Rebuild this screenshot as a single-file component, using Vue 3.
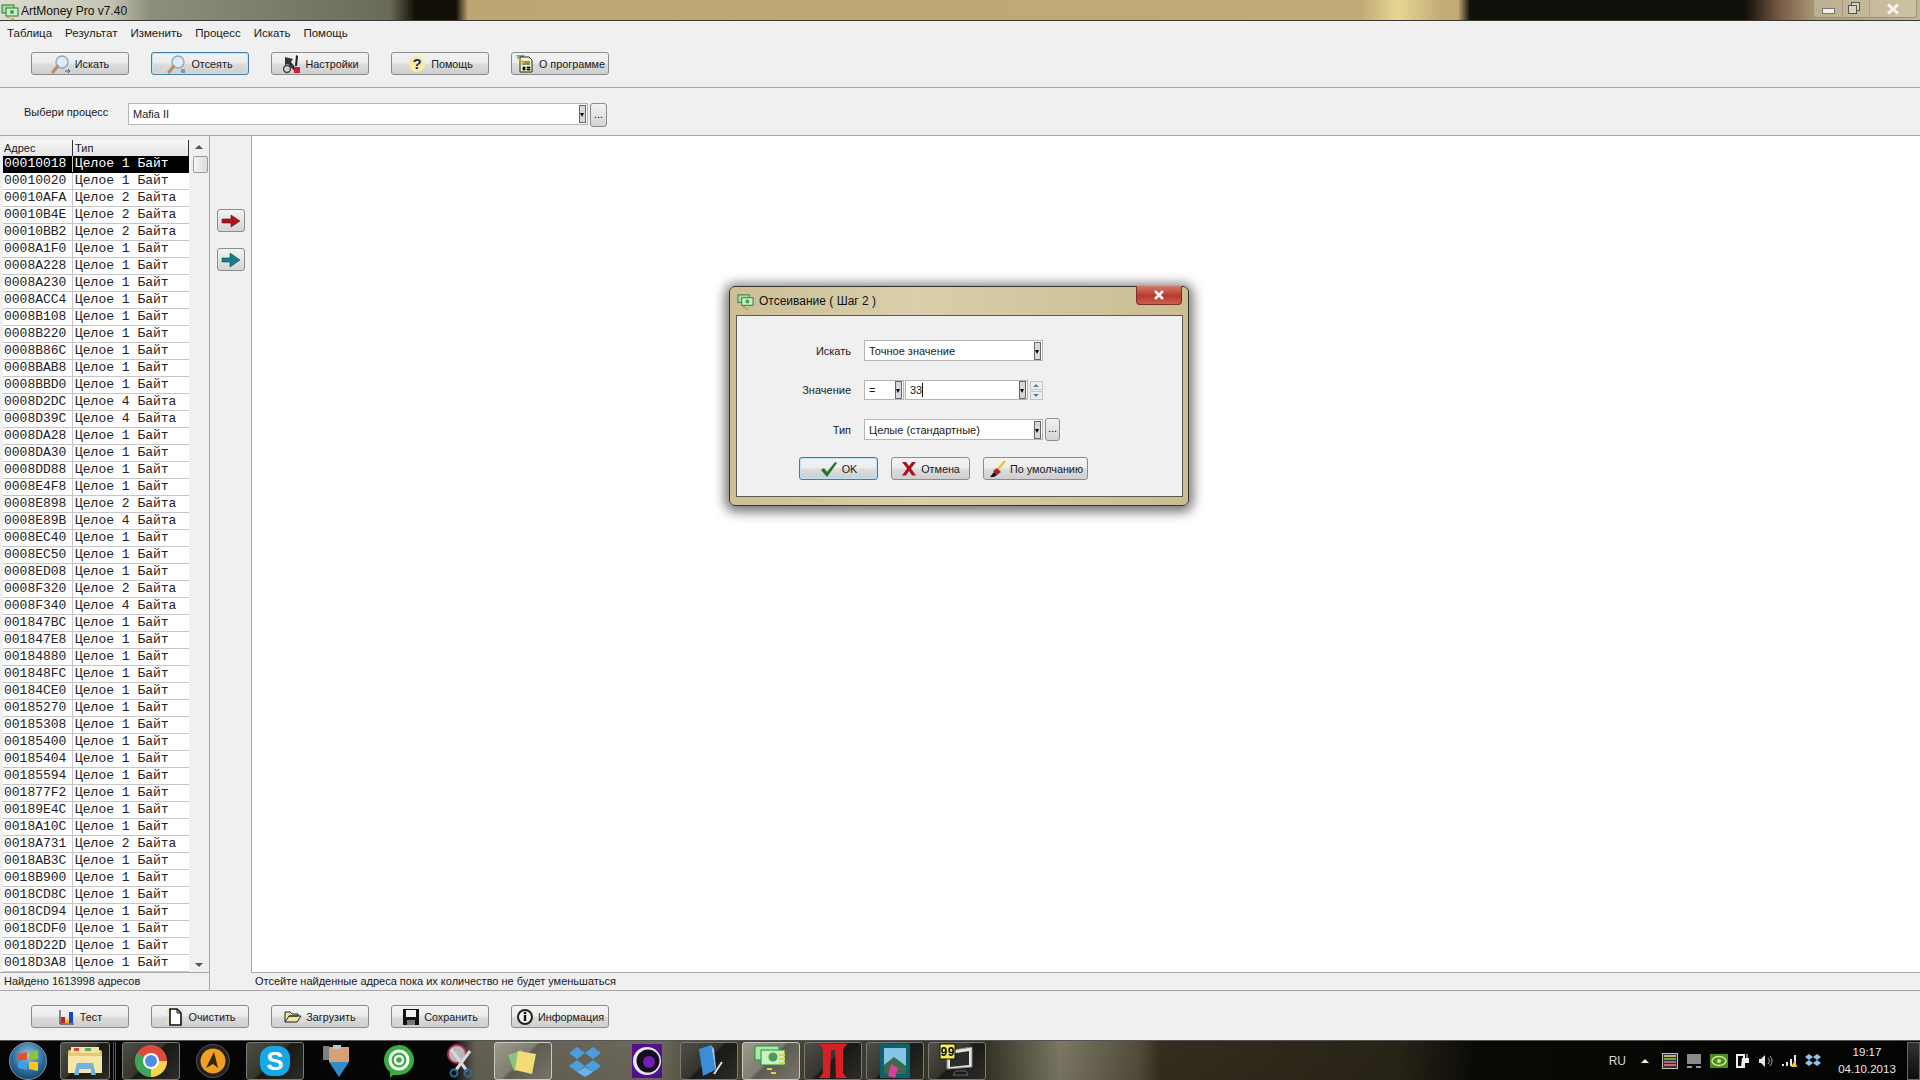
<template>
  <div class="app">
    <div class="titlebar">
      <svg class="app-icon" width="18" height="18" viewBox="0 0 18 18"><rect x="1" y="3" width="12" height="8" fill="#9fe3a0" stroke="#2d7a3a"/><rect x="5" y="6" width="12" height="8" fill="#c5f0c0" stroke="#2d7a3a"/><circle cx="11" cy="10" r="2" fill="#4f9a58"/><path d="M6 15h3M10 17h3" stroke="#b8a020" stroke-width="1.5"/></svg>
      <span class="title-text">ArtMoney Pro v7.40</span>
      <div class="win-buttons">
        <div class="win-btn min"><span class="min-bar"></span></div>
        <div class="win-btn restore"><span class="rest-back"></span><span class="rest-front"></span></div>
        <div class="win-btn close"><svg width="14" height="12" viewBox="0 0 14 12"><path d="M2 1.5l10 9M12 1.5l-10 9" stroke="#f4f4f0" stroke-width="3"/></svg></div>
      </div>
    </div>

    <div class="menu">
      <span v-for="m in menu" :key="m">{{ m }}</span>
    </div>

    <div class="toolbar top">
      <button class="btn"><svg width="20" height="20" viewBox="0 0 20 20"><circle cx="11" cy="8" r="6" fill="#dcecf6" stroke="#8fa9bd" stroke-width="1.4"/><path d="M6.5 12.5L2 18" stroke="#b98d66" stroke-width="3.2" stroke-linecap="round"/><path d="M14 17h5M17 15l2 2-2 2" stroke="#35607f" fill="none"/></svg>Искать</button>
      <button class="btn focused"><svg width="20" height="20" viewBox="0 0 20 20"><circle cx="11" cy="8" r="6" fill="#dcecf6" stroke="#8fa9bd" stroke-width="1.4"/><path d="M6.5 12.5L2 18" stroke="#b98d66" stroke-width="3.2" stroke-linecap="round"/><path d="M15 15v4M17 15v4" stroke="#35607f"/></svg>Отсеять</button>
      <button class="btn"><svg width="20" height="20" viewBox="0 0 20 20"><path d="M3 3l8 2-2 3 7 9-2 2-8-9-3 1z" fill="#333"/><path d="M14 1l2 1-1 10h-2z" fill="#222"/><rect x="12" y="13" width="6" height="6" fill="#c8202a"/><circle cx="5" cy="15" r="3.4" fill="none" stroke="#444" stroke-width="1.5"/></svg>Настройки</button>
      <button class="btn"><svg width="20" height="20" viewBox="0 0 20 20"><circle cx="10" cy="10" r="8" fill="#f6ee9c"/><text x="10" y="15" text-anchor="middle" class="help-mark">?</text></svg>Помощь</button>
      <button class="btn"><svg width="20" height="20" viewBox="0 0 20 20"><path d="M1 1h9l-5 6z" fill="#48c0a8"/><path d="M5 3h9l3 3v12H5z" fill="#fbf6c0" stroke="#222"/><path d="M7 8h8M7 10h8M8 13h2v3H8zM12 13h3v1h-3zM12 15h3v1h-3z" stroke="#222"/><path d="M2 3l7 6" stroke="#d9b040" stroke-width="2"/></svg>О программе</button>
    </div>

    <div class="process-row">
      <span class="process-label">Выбери процесс</span>
      <div class="field process-field">
        <span class="field-text">Mafia II</span>
        <span class="combo-arrow"></span>
      </div>
      <button class="dots tall">...</button>
    </div>

    <div class="main">
      <div class="left-col">
        <div class="list-wrap">
          <div class="list">
            <div class="list-head">
              <span class="cell-addr">Адрес</span>
              <span class="cell-type">Тип</span>
            </div>
            <div v-for="(r, i) in rows" :key="r.addr" class="row" :class="{ selected: i === 0 }">
              <span class="cell-addr">{{ r.addr }}</span>
              <span class="cell-type">{{ typeName(r.size) }}</span>
            </div>
          </div>
          <div class="scrollbar">
            <span class="arrow-up"></span>
            <span class="thumb"></span>
            <span class="arrow-down"></span>
          </div>
        </div>
        <div class="status">Найдено 1613998 адресов</div>
      </div>

      <div class="mid-col">
        <button class="arrow-btn"><svg width="20" height="14" viewBox="0 0 20 14"><path d="M1 5h9V1l9 6-9 6V9H1z" fill="#b3121d" stroke="#5a1015" stroke-width=".6"/></svg></button>
        <button class="arrow-btn"><svg width="20" height="16" viewBox="0 0 20 16"><path d="M1 6h8V1l10 7-10 7v-5H1z" fill="#157f86" stroke="#0c4a50" stroke-width=".6"/></svg></button>
      </div>

      <div class="right-col">
        <div class="canvas"></div>
        <div class="status">Отсейте найденные адреса пока их количество не будет уменьшаться</div>
      </div>
    </div>

    <div class="toolbar bottom">
      <button class="btn"><svg width="18" height="18" viewBox="0 0 18 18"><path d="M2 2v14h14" fill="none" stroke="#222"/><rect x="3" y="9" width="4" height="6" fill="#c8202a"/><rect x="7" y="12" width="4" height="3" fill="#e8c020"/><rect x="11" y="4" width="4" height="11" fill="#2040c0"/></svg>Тест</button>
      <button class="btn"><svg width="20" height="20" viewBox="0 0 20 20"><path d="M2 3l3 3M2 17l3-2" stroke="#f2ea90" stroke-width="3"/><path d="M5 2h7l4 4v12H5z" fill="#fff" stroke="#111" stroke-width="1.6"/><path d="M12 2v4h4" fill="none" stroke="#111"/></svg>Очистить</button>
      <button class="btn"><svg width="18" height="16" viewBox="0 0 18 16"><path d="M1 13V3h5l2 2h6v2H5l-4 6h12l4-6H5" fill="#f4e8a0" stroke="#222"/></svg>Загрузить</button>
      <button class="btn"><svg width="18" height="18" viewBox="0 0 18 18"><path d="M1 1h16v16H1z" fill="#111"/><rect x="4" y="2" width="10" height="7" fill="#f2f2f2"/><rect x="5" y="12" width="8" height="5" fill="#777"/></svg>Сохранить</button>
      <button class="btn"><svg width="18" height="18" viewBox="0 0 18 18"><circle cx="9" cy="9" r="7" fill="#f4f4f4" stroke="#222" stroke-width="2"/><path d="M9 7v6" stroke="#111" stroke-width="2.4"/><circle cx="9" cy="5" r="1.3" fill="#111"/></svg>Информация</button>
    </div>

    <div class="taskbar">
      <div class="orb">
        <svg width="46" height="38" viewBox="0 0 46 38"><defs><radialGradient id="orbg" cx=".5" cy=".35" r=".7"><stop offset="0" stop-color="#9cc8e4"/><stop offset=".6" stop-color="#2b6e9f"/><stop offset="1" stop-color="#123c5c"/></radialGradient></defs><circle cx="23" cy="19" r="18.5" fill="url(#orbg)" stroke="#7f98a8"/><path d="M13 12l9-2v8h-9z" fill="#e8502c"/><path d="M24 10l9-2v9h-9z" fill="#8cc63e"/><path d="M13 20h9v8l-9-2z" fill="#3f9fe0"/><path d="M24 20h9v9l-9-2z" fill="#f8c820"/></svg>
      </div>
      <div class="slot on explorer">
        <svg width="40" height="36" viewBox="0 0 40 36"><rect x="3" y="7" width="34" height="22" rx="2" fill="#e8c86e"/><path d="M6 4h28v6H6z" fill="#f4e4a4"/><path d="M9 5h5v3H9z" fill="#d04a3a"/><path d="M20 5h6v3h-6z" fill="#5ab04a"/><path d="M3 13h34v17H3z" fill="#f6e6a8"/><path d="M12 20h16l3 12h-5v-6H14v6H9z" fill="#6eb4dc"/></svg>
      </div>
      <div class="divider"></div>
      <div class="slot on">
        <svg width="34" height="34" viewBox="0 0 34 34"><circle cx="17" cy="17" r="16" fill="#dd4b3e"/><path d="M17 17L3.2 9A16 16 0 0 0 17 33z" fill="#3aa757"/><path d="M17 17h16a16 16 0 0 1-16 16z" fill="#fbd34b"/><circle cx="17" cy="17" r="8" fill="#fff"/><circle cx="17" cy="17" r="6" fill="#4a8fe2"/></svg>
      </div>
      <div class="slot">
        <svg width="34" height="34" viewBox="0 0 34 34"><circle cx="17" cy="17" r="16.5" fill="#222" stroke="#555"/><circle cx="17" cy="17" r="12.5" fill="#f0a021"/><path d="M10 24L18 8l4 16-5-4z" fill="#33220c"/></svg>
      </div>
      <div class="slot on">
        <svg width="36" height="34" viewBox="0 0 36 34"><rect x="3" y="2" width="30" height="30" rx="12" fill="#16a8e4"/><text x="18" y="26" text-anchor="middle" class="skype-mark">S</text></svg>
      </div>
      <div class="slot">
        <svg width="36" height="36" viewBox="0 0 36 36"><path d="M4 3h6v14H4z" fill="#7a7f8a"/><path d="M10 4h20v15H10z" fill="#d8a078"/><path d="M14 2h8v4h-8z" fill="#bcc4cc"/><path d="M10 19h20l-10 15z" fill="#2e8fc8"/></svg>
      </div>
      <div class="slot">
        <svg width="34" height="36" viewBox="0 0 34 36"><path d="M17 2a15 15 0 0 1 0 30h-6l-3 3v-6A15 15 0 0 1 17 2z" fill="#39ae3d"/><circle cx="17" cy="17" r="9" fill="none" stroke="#fff" stroke-width="3"/><circle cx="17" cy="17" r="4" fill="none" stroke="#fff" stroke-width="2.4"/></svg>
      </div>
      <div class="slot">
        <svg width="36" height="36" viewBox="0 0 36 36"><circle cx="14" cy="11" r="9" fill="#b8b8bc" stroke="#b03048" stroke-width="2"/><path d="M8 6l16 22M27 8L13 27" stroke="#d8d8dc" stroke-width="3"/><circle cx="25" cy="30" r="3.5" fill="none" stroke="#2c6c94" stroke-width="2"/><circle cx="11" cy="30" r="3.5" fill="none" stroke="#2c6c94" stroke-width="2"/></svg>
      </div>
      <div class="slot on light">
        <svg width="34" height="32" viewBox="0 0 34 32"><path d="M2 10l14-5 4 16-12 5z" fill="#8cc47c"/><path d="M12 6l18 3-4 20-17-4z" fill="#f2dc78"/></svg>
      </div>
      <div class="slot">
        <svg width="34" height="34" viewBox="0 0 34 34"><path d="M9 3l8 6-8 6-8-6zM25 3l8 6-8 6-8-6zM9 16l8 6-8 6-8-6zM25 16l8 6-8 6-8-6z" fill="#4a9ee0"/><path d="M9 28l8 5 8-5-8-5z" fill="#6ab2ea"/></svg>
      </div>
      <div class="slot">
        <svg width="34" height="36" viewBox="0 0 34 36"><rect x="2" y="1" width="30" height="34" fill="#52108c"/><circle cx="17" cy="18" r="14" fill="#e8e4f0"/><circle cx="18" cy="18" r="11.5" fill="#15101c"/><circle cx="19" cy="19" r="6" fill="#6c1fb0"/></svg>
      </div>
      <div class="slot on">
        <svg width="30" height="34" viewBox="0 0 30 34"><path d="M5 5l12-4 4 25-12 6z" fill="#3c8ed8"/><path d="M17 1l3 4 2 19-1 2z" fill="#8cc4f0"/><path d="M20 30l8-12" stroke="#d4e4f4" stroke-width="2"/></svg>
      </div>
      <div class="slot on light">
        <svg width="36" height="36" viewBox="0 0 36 36"><rect x="2" y="3" width="24" height="14" fill="#a8e8a8" stroke="#2a8a3a"/><rect x="8" y="7" width="24" height="15" fill="#c8f0c0" stroke="#2a8a3a"/><circle cx="20" cy="14" r="4.5" fill="#4f9a58"/><path d="M26 12h6M26 16h6M26 20h6M14 26h5M18 30h5" stroke="#e8d040" stroke-width="2"/></svg>
      </div>
      <div class="slot on">
        <svg width="32" height="36" viewBox="0 0 32 36"><path d="M2 1h28l-4 5v24l4 5H19l-1-28h-4l-1 28H2l4-5V6z" fill="#d81f26"/></svg>
      </div>
      <div class="slot on">
        <svg width="32" height="36" viewBox="0 0 32 36"><rect x="1" y="1" width="30" height="34" fill="#10606c"/><rect x="5" y="5" width="22" height="26" fill="#86c4e8"/><path d="M5 22l10-8 12 9v8H5z" fill="#3a6a48"/><path d="M9 33l3-12 7 4-3 10z" fill="#d8409a"/></svg>
      </div>
      <div class="slot on">
        <svg width="36" height="36" viewBox="0 0 36 36"><path d="M8 8l25-4v20L8 26z" fill="#e4e4e4" stroke="#888"/><path d="M11 11l19-3v14l-19 2z" fill="#2c2c2c"/><path d="M17 28h10l2 4H14z" fill="#181818" stroke="#666"/><rect x="1" y="1" width="15" height="15" fill="#f6ee54" stroke="#111"/><text x="8.5" y="13" text-anchor="middle" class="badge-mark">99</text></svg>
      </div>

      <div class="tray">
        <span class="lang">RU</span>
        <span class="tray-up"></span>
        <svg width="16" height="16" viewBox="0 0 16 16"><rect x=".5" y=".5" width="15" height="15" fill="#332a44" stroke="#c0c8a0"/><path d="M2 3h12" stroke="#c9b34a" stroke-width="2"/><path d="M2 6h12" stroke="#58a858" stroke-width="2"/><path d="M2 9h12" stroke="#a86888" stroke-width="2"/><path d="M2 12h12" stroke="#c87050" stroke-width="2"/></svg>
        <svg width="16" height="16" viewBox="0 0 16 16"><rect x="1" y="1" width="14" height="10" fill="#8a8a8a"/><path d="M1 14h5M10 14h5" stroke="#999" stroke-width="2"/></svg>
        <svg width="18" height="14" viewBox="0 0 18 14"><rect width="18" height="14" fill="#4e8c1c"/><ellipse cx="9" cy="7" rx="7" ry="4.5" fill="none" stroke="#c8e8a0" stroke-width="1.5"/><circle cx="9" cy="7" r="2" fill="#c8e8a0"/></svg>
        <svg width="14" height="16" viewBox="0 0 14 16"><path d="M1 2h7v12H1z" fill="none" stroke="#eee" stroke-width="2"/><path d="M6 5h7v5H9L7 14H5z" fill="#eee"/><path d="M8 1v4M11 1v4" stroke="#eee"/></svg>
        <svg width="15" height="14" viewBox="0 0 15 14"><path d="M1 5h2l4-4v12L3 9H1z" fill="#e8e8e8"/><path d="M10 4a4 4 0 0 1 0 6M12 2a7 7 0 0 1 0 10" stroke="#aaa" fill="none"/></svg>
        <svg width="16" height="14" viewBox="0 0 16 14"><path d="M1 10h2v2H1zM5 8h2v4H5zM9 5h2v7H9zM13 1h2v11h-2z" fill="#e8e8e8"/><path d="M10 13l4-7 2 7z" fill="#f2c830"/></svg>
        <svg width="16" height="15" viewBox="0 0 16 15"><path d="M4 1l4 3-4 3-4-3zM12 1l4 3-4 3-4-3zM4 7l4 3-4 3-4-3zM12 7l4 3-4 3-4-3z" fill="#8ec4ee"/></svg>
        <div class="clock"><span>19:17</span><span>04.10.2013</span></div>
        <div class="show-desktop"></div>
      </div>
    </div>

    <div class="dialog">
      <div class="dialog-title">
        <svg width="17" height="17" viewBox="0 0 18 18"><rect x="1" y="2" width="12" height="8" fill="#9fe3a0" stroke="#2d7a3a"/><rect x="5" y="5" width="12" height="8" fill="#c5f0c0" stroke="#2d7a3a"/><circle cx="11" cy="9" r="2" fill="#4f9a58"/><path d="M6 15h3M9 17h3" stroke="#b8a020" stroke-width="1.5"/></svg>
        <span>Отсеивание ( Шаг 2 )</span>
        <div class="dialog-close"><svg width="12" height="10" viewBox="0 0 12 10"><path d="M2 1l8 8M10 1l-8 8" stroke="#f6f6f6" stroke-width="2.6"/></svg></div>
      </div>
      <div class="dialog-body">
        <div class="d-row first">
          <span class="d-label">Искать</span>
          <div class="field wide"><span class="field-text">Точное значение</span><span class="combo-arrow"></span></div>
        </div>
        <div class="d-row second">
          <span class="d-label">Значение</span>
          <div class="field op"><span class="field-text">=</span><span class="combo-arrow"></span></div>
          <div class="field val"><span class="field-text caret">33</span><span class="combo-arrow"></span></div>
          <div class="spin"><span class="spin-up"></span><span class="spin-down"></span></div>
        </div>
        <div class="d-row third">
          <span class="d-label">Тип</span>
          <div class="field wide"><span class="field-text">Целые (стандартные)</span><span class="combo-arrow"></span></div>
          <button class="dots">...</button>
        </div>
        <div class="d-buttons">
          <button class="btn focused"><svg width="18" height="16" viewBox="0 0 18 16"><path d="M1 9l3-2 3 4 8-10 2 1-10 14z" fill="#1c7a2a"/></svg>OK</button>
          <button class="btn"><svg width="16" height="15" viewBox="0 0 16 15"><path d="M1 1h4l3 4 3-4h4l-5 6.500 5 7h-4l-3-4.500-3 4.500H1l5-7z" fill="#a8141c"/></svg>Отмена</button>
          <button class="btn def"><svg width="18" height="18" viewBox="0 0 18 18"><path d="M17 1l-7 8" stroke="#e8c830" stroke-width="2.400"/><path d="M9 8l4 4-4 3-4-4z" fill="#b02028"/><path d="M2 17l4-5 3 3-3 2z" fill="#111"/></svg>По умолчанию</button>
        </div>
      </div>
    </div>
  </div>
</template>

<script setup>
const menu = ['Таблица', 'Результат', 'Изменить', 'Процесс', 'Искать', 'Помощь']

const data = `00010018 1,00010020 1,00010AFA 2,00010B4E 2,00010BB2 2,0008A1F0 1,0008A228 1,0008A230 1,0008ACC4 1,0008B108 1,0008B220 1,0008B86C 1,0008BAB8 1,0008BBD0 1,0008D2DC 4,0008D39C 4,0008DA28 1,0008DA30 1,0008DD88 1,0008E4F8 1,0008E898 2,0008E89B 4,0008EC40 1,0008EC50 1,0008ED08 1,0008F320 2,0008F340 4,001847BC 1,001847E8 1,00184880 1,001848FC 1,00184CE0 1,00185270 1,00185308 1,00185400 1,00185404 1,00185594 1,001877F2 1,00189E4C 1,0018A10C 1,0018A731 2,0018AB3C 1,0018B900 1,0018CD8C 1,0018CD94 1,0018CDF0 1,0018D22D 1,0018D3A8 1`

const rows = data.split(',').map((s) => {
  const [addr, size] = s.split(' ')
  return { addr, size }
})

const typeName = (size) => {
  if (size === '1') return 'Целое 1 Байт'
  return `Целое ${size} Байта`
}
</script>

<style>
html, body {
  margin: 0;
  overflow: hidden;
}
</style>

<style scoped>
.app {
  position: relative;
  width: 1920px;
  height: 1080px;
  display: flex;
  flex-direction: column;
  overflow: hidden;
  background: #f0f0f0;
  color: #1a1a1a;
  font-family: "Liberation Sans", Arial, sans-serif;
  font-size: 11px;
}

.titlebar {
  height: 21px;
  box-sizing: border-box;
  padding-top: 1px;
  flex: none;
  display: flex;
  align-items: center;
  border-bottom: 1px solid #3a3a34;
  background: linear-gradient(90deg, #ddddd0 0, #c4c4b4 110px, #8e8e7c 150px, #777966 300px, #6a6a58 390px, #141008 415px, #141008 456px, #bda672 468px, #c0aa76 1360px, #e6d694 1398px, #c4ae78 1440px, #c2ac76 1458px, #12100a 1470px, #12100a 1745px, #7a5a44 1780px, #a89878 1815px, #c2b898 1920px);
}
.app-icon {
  flex: none;
  margin-left: 1px;
}
.title-text {
  margin-left: 2px;
  font-size: 12px;
  color: #111;
}
.win-buttons {
  margin-left: auto;
  margin-right: 3px;
  margin-top: -1px;
  height: 17px;
  align-self: flex-start;
  display: flex;
  border: 1px solid #9c9276;
  border-top: 0;
  border-radius: 0 0 4px 4px;
  background: rgba(226, 218, 190, .35);
}
.win-btn {
  display: flex;
  align-items: center;
  justify-content: center;
  position: relative;
  border-right: 1px solid #a89e80;
}
.win-btn.close {
  border-right: 0;
  width: 46px;
}
.win-btn.min {
  width: 28px;
}
.win-btn.restore {
  width: 26px;
}
.min-bar {
  width: 11px;
  height: 4px;
  margin-top: 4px;
  background: #f2f0e6;
  border: 1px solid #777;
}
.rest-back, .rest-front {
  position: absolute;
  width: 7px;
  height: 7px;
  border: 1.5px solid #555;
  background: #d8d4c4;
}
.rest-back {
  top: 2px;
  left: 8px;
}
.rest-front {
  top: 5px;
  left: 5px;
}

.menu {
  height: 24px;
  flex: none;
  display: flex;
  align-items: center;
  gap: 13px;
  padding-left: 7px;
  font-size: 11.5px;
}

.toolbar {
  display: flex;
  flex: none;
  gap: 22px;
  padding-left: 31px;
}
.toolbar.top {
  padding-top: 7px;
  height: 35px;
  border-bottom: 1px solid #a8a8a8;
}
.toolbar.bottom {
  height: 35px;
  padding-top: 14px;
  border-top: 1px solid #a8a8a8;
}

.btn {
  width: 98px;
  height: 23px;
  padding: 0;
  display: inline-flex;
  align-items: center;
  justify-content: center;
  gap: 4px;
  border: 1px solid #8c8c8c;
  border-radius: 3px;
  background: linear-gradient(#f3f3f3 0, #ececec 48%, #dcdcdc 52%, #cfcfcf 100%);
  font: inherit;
  font-size: 10.8px;
  color: #1a1a1a;
}
.btn.focused {
  border-color: #3c7fa8;
  box-shadow: inset 0 0 0 1px #bfe4f6;
}
.btn svg {
  flex: none;
}
.help-mark {
  font: bold 15px "Liberation Sans", sans-serif;
  fill: #1c1c8c;
}

.process-row {
  flex: none;
  height: 48px;
  display: flex;
  align-items: flex-start;
  padding-top: 15px;
  box-sizing: border-box;
  border-bottom: 1px solid #a8a8a8;
}
.process-label {
  margin: 3px 0 0 24px;
  width: 104px;
}
.field {
  box-sizing: border-box;
  display: flex;
  align-items: center;
  justify-content: space-between;
  height: 22px;
  background: #fff;
  border: 1px solid #b4b4b4;
  padding-right: 1px;
}
.process-field {
  width: 460px;
}
.field-text {
  padding-left: 4px;
}
.combo-arrow {
  position: relative;
  box-sizing: border-box;
  width: 7px;
  height: 18px;
  border: 1px solid #666;
  background: #d8d8d8;
}
.combo-arrow::after {
  content: "";
  position: absolute;
  left: 0;
  top: 7px;
  border-left: 2.5px solid transparent;
  border-right: 2.5px solid transparent;
  border-top: 4px solid #000;
}
.dots {
  box-sizing: border-box;
  width: 16px;
  height: 23px;
  margin-left: 1px;
  padding: 0 0 2px;
  border: 1px solid #8c8c8c;
  border-radius: 3px;
  background: linear-gradient(#f3f3f3, #d4d4d4);
  font: inherit;
  line-height: 1;
}
.dots.tall {
  margin-left: 2px;
  width: 17px;
  height: 24px;
}

.main {
  flex: 1;
  min-height: 0;
  display: flex;
}
.left-col {
  width: 210px;
  flex: none;
  box-sizing: border-box;
  border-right: 1px solid #a8a8a8;
  display: flex;
  flex-direction: column;
}
.list-wrap {
  flex: 1;
  padding: 4px 2px 0 3px;
  display: flex;
  background: #f0f0f0;
  border-bottom: 1px solid #a8a8a8;
}
.list {
  width: 186px;
  flex: none;
}
.list-head {
  height: 16px;
  display: flex;
  align-items: center;
  background: linear-gradient(#f6f6f6, #e4e4e4);
  font-size: 11px;
}
.list-head .cell-addr, .list-head .cell-type {
  height: 16px;
  line-height: 17px;
  font-family: inherit;
  letter-spacing: 0;
  border-right: 1px solid #333;
}
.cell-addr {
  box-sizing: border-box;
  width: 70px;
  flex: none;
  padding-left: 1px;
  border-right: 1px solid #c6c6c6;
}
.cell-type {
  box-sizing: border-box;
  flex: 1;
  padding-left: 2px;
}
.row {
  box-sizing: border-box;
  height: 17px;
  display: flex;
  align-items: center;
  background: #fff;
  border-bottom: 1px solid #c6c6c6;
  font: 13px/16px "Liberation Mono", "Courier New", monospace;
  color: #222;
  white-space: pre;
}
.row.selected {
  background: #000;
  color: #fff;
  border-bottom-color: #000;
}
.scrollbar {
  position: relative;
  flex: 1;
  margin-left: 1px;
  background: #f0f0f0;
}
.arrow-up, .arrow-down {
  position: absolute;
  left: 5px;
  width: 0;
  height: 0;
  border-left: 4px solid transparent;
  border-right: 4px solid transparent;
}
.arrow-up {
  top: 5px;
  border-bottom: 4px solid #555;
}
.arrow-down {
  bottom: 5px;
  border-top: 4px solid #555;
}
.thumb {
  position: absolute;
  top: 16px;
  left: 3px;
  box-sizing: border-box;
  width: 15px;
  height: 17px;
  border: 1px solid #9c9c9c;
  border-radius: 2px;
  background: linear-gradient(90deg, #f6f6f6, #dcdcdc);
}
.status {
  height: 17px;
  flex: none;
  line-height: 17px;
  padding-left: 4px;
  white-space: nowrap;
}

.mid-col {
  width: 41px;
  flex: none;
  padding: 73px 0 0 7px;
  box-sizing: border-box;
  display: flex;
  flex-direction: column;
  gap: 16px;
}
.arrow-btn {
  width: 28px;
  height: 23px;
  padding: 0;
  display: flex;
  align-items: center;
  justify-content: center;
  border: 1px solid #8c8c8c;
  border-radius: 3px;
  background: linear-gradient(#f3f3f3, #d4d4d4);
}
.right-col {
  flex: 1;
  min-width: 0;
  display: flex;
  flex-direction: column;
}
.canvas {
  flex: 1;
  background: #fff;
  border-left: 1px solid #a8a8a8;
  border-bottom: 1px solid #a8a8a8;
}

.taskbar {
  flex: none;
  height: 40px;
  box-sizing: border-box;
  display: flex;
  align-items: center;
  border-top: 1px solid #555;
  color: #e6e6e6;
  background:
    linear-gradient(rgba(0, 0, 0, .1), rgba(0, 0, 0, .15)),
    linear-gradient(90deg, #060606 0, #060606 452px, #6e6b5c 475px, #787566 660px, #57533f 700px, #3a3828 985px, #8a8570 1060px, #5a5442 1139px, #3a3322 1160px, #2c2718 1400px, #0a0a06 1480px, #040404 1920px);
}
.orb {
  width: 56px;
  flex: none;
  margin-right: 4px;
  display: flex;
  justify-content: center;
}
.slot {
  box-sizing: border-box;
  width: 58px;
  height: 38px;
  flex: none;
  margin: 0 2px;
  display: flex;
  align-items: center;
  justify-content: center;
  border: 1px solid transparent;
}
.slot.on {
  border-color: #7a7a72;
  border-radius: 3px;
  background: linear-gradient(135deg, #4e4e48 0, #36362f 45%, #191916 50%, #2c2b27 100%);
}
.slot.on.light {
  background: linear-gradient(135deg, #9c9a8c 0, #807e70 45%, #5e5c50 50%, #77756a 100%);
  border-color: #c8c8c0;
}
.slot.explorer {
  width: 50px;
  margin: 0;
}
.divider {
  box-sizing: border-box;
  width: 3px;
  height: 38px;
  flex: none;
  margin: 0 4px 0 3px;
  border-left: 1px solid #555;
  border-right: 1px solid #555;
}
.slot svg {
  flex: none;
}
.skype-mark {
  font: bold 26px "Liberation Sans", sans-serif;
  fill: #fff;
}
.badge-mark {
  font: bold 12px "Liberation Mono", monospace;
  fill: #111;
}
.tray {
  margin-left: auto;
  display: flex;
  align-items: center;
  height: 100%;
  gap: 8px;
}
.lang {
  margin-right: 7px;
  font-size: 12px;
  color: #d8d8d8;
}
.tray-up {
  width: 0;
  height: 0;
  margin: 0 5px 0 0;
  border-left: 4px solid transparent;
  border-right: 4px solid transparent;
  border-bottom: 4px solid #eee;
}
.clock {
  width: 64px;
  margin-left: 6px;
  display: flex;
  flex-direction: column;
  align-items: center;
  gap: 3px;
  line-height: 14px;
  font-size: 11.5px;
  color: #e8e8e8;
}
.show-desktop {
  width: 13px;
  height: 38px;
  margin-left: 0;
  box-sizing: border-box;
  border: 1px solid #666;
  background: linear-gradient(#333, #0c0c0c);
}

.dialog {
  position: absolute;
  left: 729px;
  top: 286px;
  width: 460px;
  height: 220px;
  box-sizing: border-box;
  display: flex;
  flex-direction: column;
  border: 1px solid #333;
  border-radius: 6px;
  background: linear-gradient(90deg, #cdbf96, #d9cfac 40%, #cbbd92);
  box-shadow: 0 2px 12px 4px rgba(0, 0, 0, .55);
}
.dialog-title {
  position: relative;
  height: 28px;
  flex: none;
  display: flex;
  align-items: center;
  gap: 5px;
  padding-left: 7px;
  font-size: 12px;
  color: #111;
}
.dialog-close {
  position: absolute;
  right: 6px;
  top: -1px;
  width: 46px;
  height: 19px;
  box-sizing: border-box;
  display: flex;
  align-items: center;
  justify-content: center;
  border: 1px solid #7a3028;
  border-top: 0;
  border-radius: 0 0 4px 4px;
  background: linear-gradient(#d2796c, #b83a2c 55%, #c9604e);
}
.dialog-body {
  flex: 1;
  margin: 0 5px 8px 6px;
  padding-top: 24px;
  box-sizing: border-box;
  background: #f0f0f0;
  border: 1px solid #5a5a50;
}
.d-row {
  display: flex;
  align-items: center;
}
.d-label {
  width: 114px;
  flex: none;
  margin-right: 13px;
  text-align: right;
}
.d-row.first .field, .d-row.third .field {
  height: 21px;
}
.d-row.second {
  margin-top: 19px;
}
.d-row.second .field {
  height: 20px;
}
.d-row.third {
  margin-top: 18px;
}
.field.wide {
  width: 179px;
}
.field.op {
  width: 40px;
  margin-right: 1px;
}
.field.val {
  width: 123px;
}
.caret {
  border-right: 1px solid #111;
  padding-right: 0;
  line-height: 14px;
  margin-left: 0;
}
.spin {
  width: 13px;
  height: 19px;
  margin-left: 2px;
  display: flex;
  flex-direction: column;
  gap: 1px;
}
.spin-up, .spin-down {
  position: relative;
  flex: 1;
  border: 1px solid #c4c4c4;
  background: #e8eef4;
}
.spin-up::after, .spin-down::after {
  content: "";
  position: absolute;
  left: 2px;
  top: 2px;
  border-left: 3.5px solid transparent;
  border-right: 3.5px solid transparent;
}
.spin-up::after {
  border-bottom: 3px solid #6a7a8c;
}
.spin-down::after {
  border-top: 3px solid #6a7a8c;
}
.d-row.third .dots {
  width: 15px;
  height: 23px;
  margin-left: 2px;
}
.d-buttons {
  margin-top: 16px;
  padding-left: 62px;
  display: flex;
  gap: 13px;
}
.d-buttons .btn {
  width: 79px;
  height: 23px;
}
.d-buttons .btn.def {
  width: 105px;
}
</style>
